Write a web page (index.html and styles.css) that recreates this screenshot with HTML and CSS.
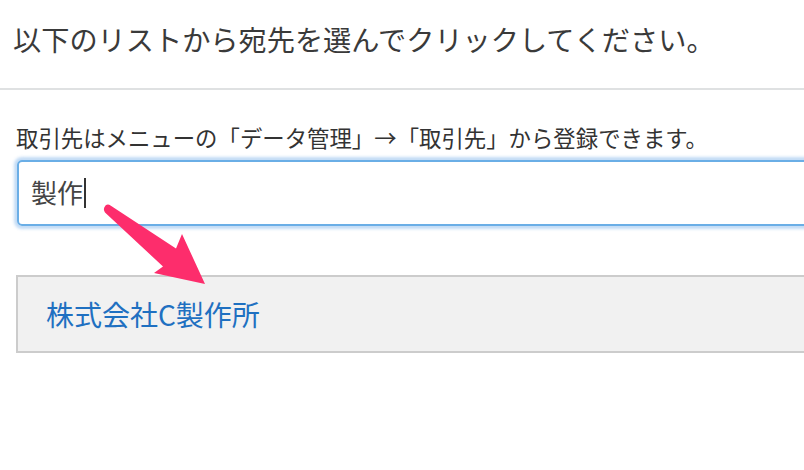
FILE: index.html
```html
<!DOCTYPE html>
<html lang="ja">
<head>
<meta charset="utf-8">
<link rel="stylesheet" href="styles.css">
</head>
<body>
<header class="header">
  <h1 class="title">以下のリストから宛先を選んでクリックしてください。</h1>
</header>
<main class="content">
  <p class="help">取引先はメニューの「データ管理」→「取引先」から登録できます。</p>
  <div class="search"><span class="search-text">製作</span><span class="caret"></span></div>
  <ul class="results">
    <li class="result"><a class="result-link" href="#">株式会社C製作所</a></li>
  </ul>
  <svg class="arrow" width="120" height="90" viewBox="100 200 120 90">
    <path d="M105.5 205.5 Q108 203.5 110.5 205.6 L176 248.5 L182 234 L205 284 L154 273 L163 266.5 L105 212.5 Q102.5 209 105.5 205.5 Z" fill="#fd2d6c"/>
  </svg>
</main>
</body>
</html>
```

FILE: styles.css
```css
html, body {
  margin: 0;
  padding: 0;
  background: #ffffff;
  overflow: hidden;
}

body {
  font-family: "Noto Sans CJK JP", "Noto Sans", sans-serif;
  color: #333333;
  width: 804px;
  height: 470px;
  position: relative;
}

.header {
  height: 90px;
  box-sizing: border-box;
  padding: 19px 0 0 13px;
  border-bottom: 2px solid #dfe1e2;
}

.title {
  margin: 0;
  font-size: 28.2px;
  font-weight: normal;
  line-height: 40px;
  color: #3a3a3a;
  white-space: nowrap;
}

.content {
  padding-left: 16px;
  margin-right: -40px;
}

.help {
  margin: 32px 0 0;
  font-size: 22.4px;
  line-height: 30px;
  color: #333333;
  white-space: nowrap;
}

.search {
  margin-top: 8px;
  margin-left: 1px;
  height: 66px;
  box-sizing: border-box;
  border: 2px solid #6aaee6;
  border-radius: 5px;
  box-shadow: 0 0 3px 3px rgba(120, 175, 233, 0.45);
  display: flex;
  align-items: center;
  padding-left: 12px;
}

.search-text {
  font-size: 26px;
  line-height: 36px;
  color: #444444;
  position: relative;
  top: -1px;
}

.caret {
  width: 2px;
  height: 30px;
  background: #333333;
  margin-left: 1px;
}

.results {
  list-style: none;
  margin: 49px 0 0;
  padding: 0;
}

.result {
  height: 78px;
  box-sizing: border-box;
  border: 2px solid #cccccc;
  background: #f1f1f1;
  display: flex;
  align-items: center;
  padding-left: 28px;
}

.result-link {
  font-size: 28px;
  line-height: 40px;
  color: #1f70c1;
  text-decoration: none;
}

.arrow {
  position: absolute;
  left: 100px;
  top: 200px;
}
```
